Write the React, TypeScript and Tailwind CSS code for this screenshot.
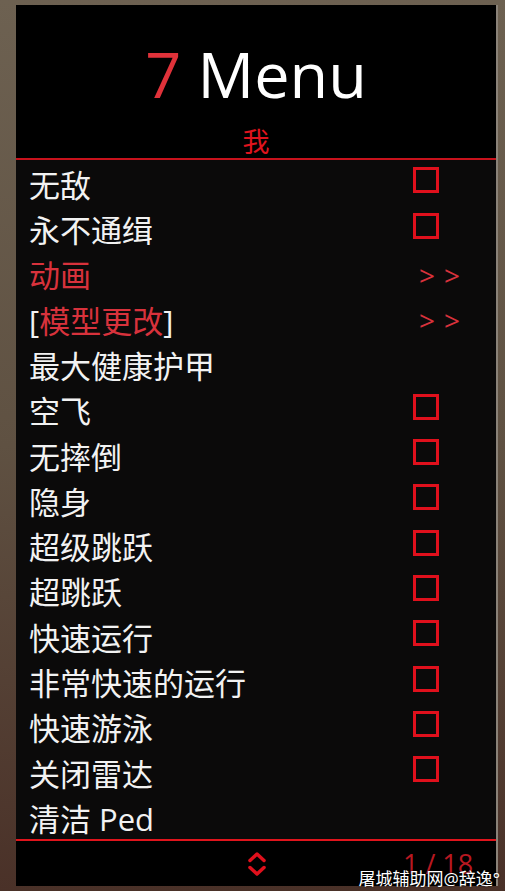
import React from 'react';

type Item = {
  label: React.ReactNode;
  kind: 'toggle' | 'submenu' | 'action';
};

const items: Item[] = [
  { label: '无敌', kind: 'toggle' },
  { label: '永不通缉', kind: 'toggle' },
  { label: <span className="text-[#d8323c]">动画</span>, kind: 'submenu' },
  {
    label: (
      <>
        [<span className="text-[#d8323c]">模型更改</span>]
      </>
    ),
    kind: 'submenu',
  },
  { label: '最大健康护甲', kind: 'action' },
  { label: '空飞', kind: 'toggle' },
  { label: '无摔倒', kind: 'toggle' },
  { label: '隐身', kind: 'toggle' },
  { label: '超级跳跃', kind: 'toggle' },
  { label: '超跳跃', kind: 'toggle' },
  { label: '快速运行', kind: 'toggle' },
  { label: '非常快速的运行', kind: 'toggle' },
  { label: '快速游泳', kind: 'toggle' },
  { label: '关闭雷达', kind: 'toggle' },
  { label: '清洁 Ped', kind: 'action' },
];

function Checkbox() {
  return <div className="ml-[2px] w-[26px] h-[26px] border-[3px] border-[#e0101c] mb-[4px]" />;
}

function Arrows() {
  return (
    <div className="ml-[8px] mt-[4px] flex gap-[9px] text-[28px] leading-none text-[#d8323c]">
      <span>&gt;</span>
      <span>&gt;</span>
    </div>
  );
}

function ScrollIcon() {
  return (
    <svg width="22" height="26" viewBox="0 0 22 26" fill="none" stroke="#e0101c" strokeWidth={3.5} strokeLinecap="round" strokeLinejoin="round">
      <path d="M4 9.5 L11 3 L18 9.5" />
      <path d="M4 16.5 L11 23 L18 16.5" />
    </svg>
  );
}

function MenuRow({ item }: { item: Item }) {
  return (
    <div className="h-[45.3px] flex items-center pl-[13px]">
      <div className="flex-1 pt-[6px] text-[31px] leading-none text-[#f2f2f2] whitespace-nowrap">{item.label}</div>
      <div className="w-[85px] flex items-center">
        {item.kind === 'toggle' && <Checkbox />}
        {item.kind === 'submenu' && <Arrows />}
      </div>
    </div>
  );
}

export default function App() {
  return (
    <div
      className="relative w-[505px] h-[891px] pt-[5px] pl-[16px] pr-[5px] pb-[5px] bg-gradient-to-b from-[#6d6151] via-[#5f5142] to-[#4a3128]"
      style={{ fontFamily: '"Open Sans", "Noto Sans CJK SC", sans-serif' }}
    >
      <div className="w-[482px] h-[881px] flex flex-col border-r-2 border-[#8a8278]">
        {/* Title */}
        <div className="h-[153px] bg-black flex flex-col items-center">
          <div className="mt-[32px] text-[63px] leading-[74px] text-white">
            <span className="text-[#e0323a]">7</span> Menu
          </div>
          <div className="mt-[16px] text-[27px] leading-[30px] text-[#e0141e]">我</div>
        </div>
        <div className="h-[2px] bg-[#c8121c]" />

        {/* Options */}
        <div className="flex-1 bg-[#0b0a0a] flex flex-col">
          {items.map((item, i) => (
            <MenuRow key={i} item={item} />
          ))}
        </div>
        <div className="h-[2px] bg-[#e0141c]" />

        {/* Footer */}
        <div className="h-[45px] bg-black flex items-center">
          <div className="w-[230px]" />
          <ScrollIcon />
          <div className="ml-[135px] text-[27px] leading-none text-[#b81820]">1 / 18</div>
        </div>
      </div>

      <div className="absolute right-[5px] bottom-[4px] text-[17px] leading-none text-white [text-shadow:0_0_2px_#000]">
        屠城辅助网@辞逸°
      </div>
    </div>
  );
}
